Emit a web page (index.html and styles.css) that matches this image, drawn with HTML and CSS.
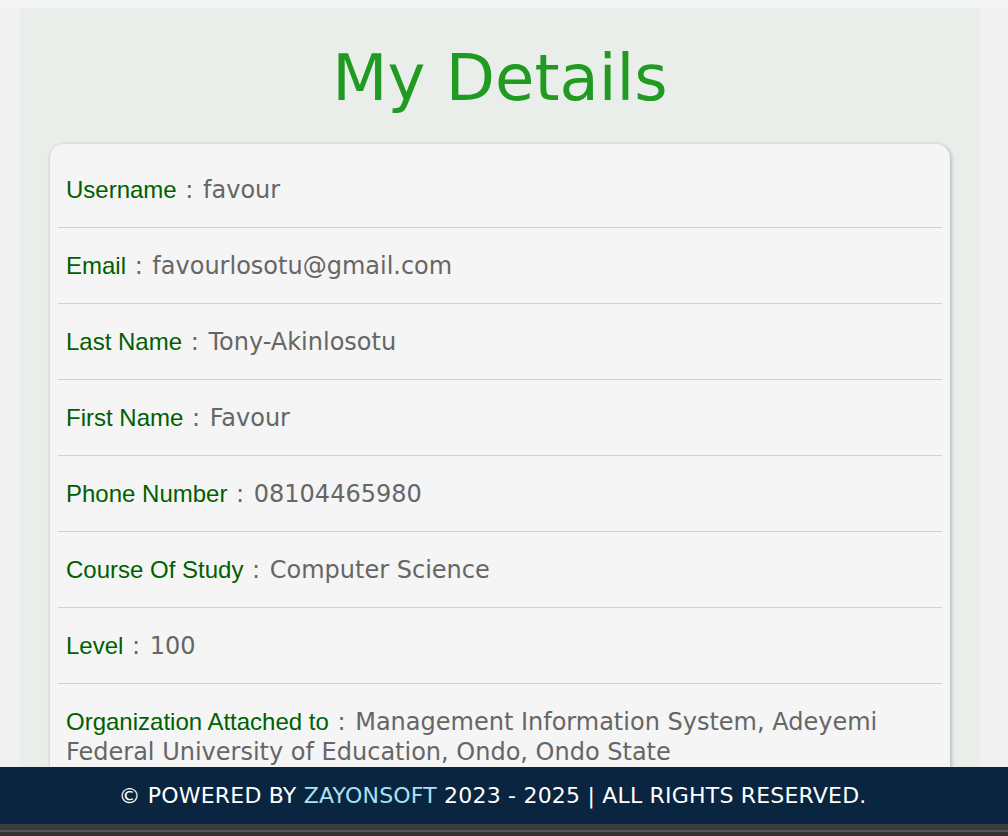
FILE: index.html
```html
<!DOCTYPE html>
<html lang="en">
<head>
<meta charset="utf-8">
<title>My Details</title>
<link rel="stylesheet" href="styles.css">
</head>
<body>
<div class="topbar"></div>
<main class="page">
  <h1 class="title">My Details</h1>
  <ul class="card">
    <li class="row"><span class="label">Username</span><span class="sep"> : </span>favour</li>
    <li class="row"><span class="label">Email</span><span class="sep"> : </span>favourlosotu@gmail.com</li>
    <li class="row"><span class="label">Last Name</span><span class="sep"> : </span>Tony-Akinlosotu</li>
    <li class="row"><span class="label">First Name</span><span class="sep"> : </span>Favour</li>
    <li class="row"><span class="label">Phone Number</span><span class="sep"> : </span>08104465980</li>
    <li class="row"><span class="label">Course Of Study</span><span class="sep"> : </span>Computer Science</li>
    <li class="row"><span class="label">Level</span><span class="sep"> : </span>100</li>
    <li class="row"><span class="label">Organization Attached to</span><span class="sep"> : </span>Management Information System, Adeyemi Federal University of Education, Ondo, Ondo State</li>
  </ul>
</main>
<footer class="footer">© POWERED BY <span class="brand">ZAYONSOFT</span> 2023 - 2025 | ALL RIGHTS RESERVED.</footer>
<div class="bottombar"></div>
</body>
</html>
```

FILE: styles.css
```css
html, body {
  margin: 0;
  padding: 0;
}
body {
  background: #f1f1f1;
  font-family: "DejaVu Sans", Verdana, sans-serif;
}
.topbar {
  height: 8px;
  background: #f5f5f5;
}
.page {
  margin: 0 28px 0 20px;
  background: #e9eeeb;
  padding: 33px 30px 80px;
  min-height: 700px;
}
.title {
  margin: 0 0 29px;
  text-align: center;
  font-family: "DejaVu Sans", Verdana, sans-serif;
  font-weight: normal;
  font-size: 64px;
  line-height: normal;
  color: #219a21;
}
.card {
  list-style: none;
  margin: 0;
  padding: 8px;
  background: #f5f5f5;
  border-radius: 14px;
  box-shadow: 1px 1px 4px rgba(0, 0, 0, 0.28);
}
.row {
  padding: 23px 8px 22px;
  font-size: 24px;
  line-height: 30px;
  color: #666666;
  border-bottom: 1px solid #d2d2d2;
}
.row:last-child {
  border-bottom: none;
}
.label {
  font-family: "Liberation Sans", Arial, sans-serif;
  color: #005f00;
}
.sep {
  margin: 0 2px 0 1px;
}
.footer {
  position: fixed;
  left: 0;
  right: 0;
  bottom: 12px;
  height: 57px;
  line-height: 57px;
  background: #0a2540;
  color: #ffffff;
  text-align: center;
  font-size: 22px;
  letter-spacing: 0.2px;
  padding-right: 23px;
}
.brand {
  color: #a9e2f3;
}
.bottombar {
  position: fixed;
  left: 0;
  right: 0;
  bottom: 0;
  height: 12px;
  box-sizing: border-box;
  border-top: 6px solid #3c3c3c;
  border-bottom: 4px solid #333333;
  background-color: #555555;
}
```
